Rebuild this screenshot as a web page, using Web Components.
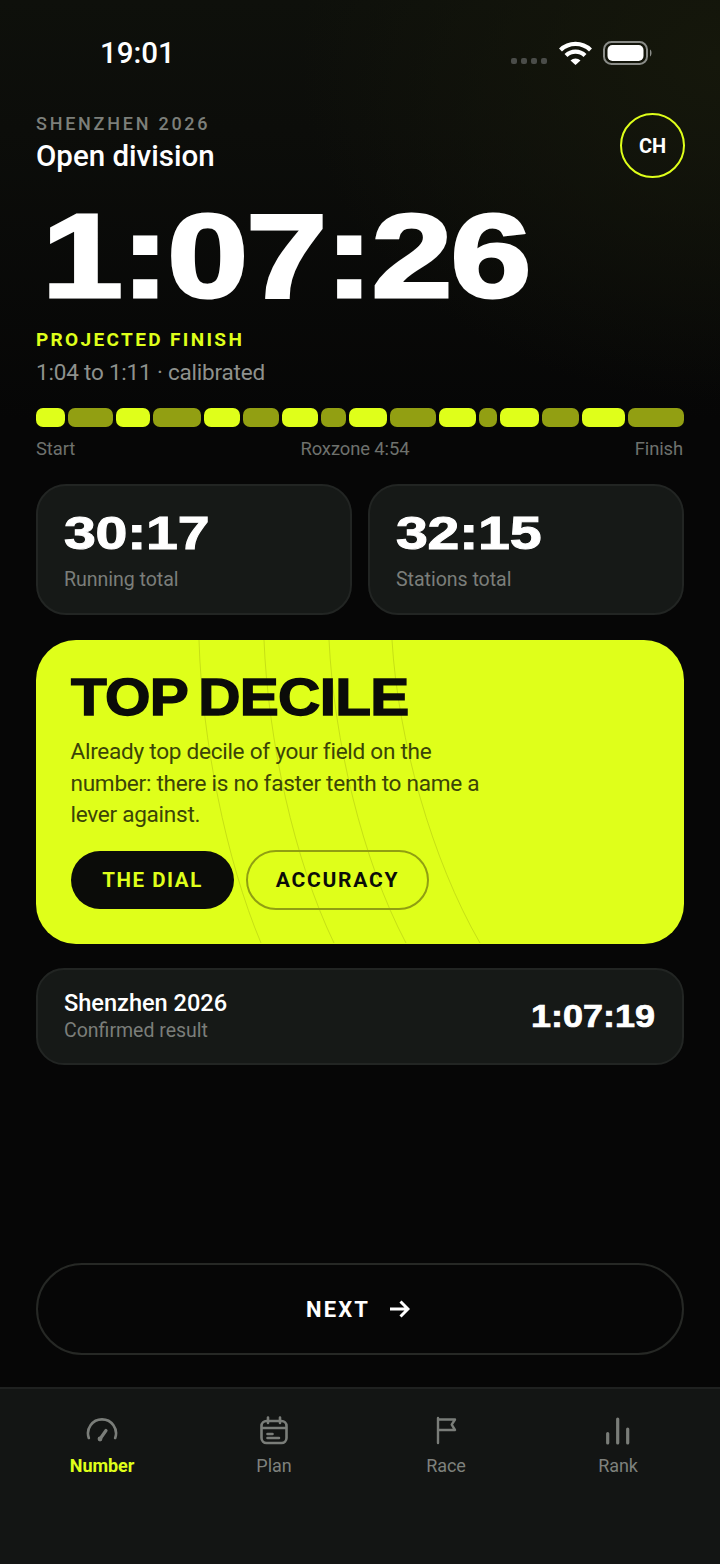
<!DOCTYPE html>
<html><head><meta charset="utf-8"><style>
html,body{margin:0;padding:0;background:#050505}
body{width:720px;height:1564px;overflow:hidden;font-family:Roboto,"Liberation Sans",sans-serif;color:#fff}
</style></head><body>
<x-screen>
  <x-status></x-status>
  <x-head></x-head>
  <x-big></x-big>
  <x-segments></x-segments>
  <x-stats></x-stats>
  <x-hero></x-hero>
  <x-result></x-result>
  <x-next></x-next>
  <x-tabs></x-tabs>
</x-screen>
<script>
function def(name,html){customElements.define(name,class extends HTMLElement{constructor(){super();this.attachShadow({mode:'open'}).innerHTML=html}})}
const wide='font-family:"Liberation Sans",sans-serif;font-weight:700;display:inline-block;transform-origin:left center;';
def('x-screen',`<style>:host{display:flex;flex-direction:column;width:720px;height:1564px;box-sizing:border-box;background:radial-gradient(420px 340px at 100% 60px,#15170b,transparent),linear-gradient(#0e100b 0,#0c0d0a 130px,#060606 420px)}</style><slot></slot>`);
def('x-status',`<style>:host{display:flex;height:104px;flex:none;align-items:flex-start;box-sizing:border-box;padding:37px 67px 0 100px;justify-content:space-between}
.t{font-family:Roboto,sans-serif;font-size:29.5px;font-weight:500;line-height:32px}
.r{display:flex;align-items:flex-start;height:28px;position:relative;width:143px}
.d{position:absolute;left:1px;top:21px;display:flex;gap:4px}.d i{width:6px;height:6px;border-radius:2px;background:#4a4c49}
svg{position:absolute;left:49px;top:3px}
</style><span class="t">19:01</span><span class="r"><span class="d"><i></i><i></i><i></i><i></i></span>
<svg width="96" height="26" viewBox="0 0 96 26"><path d="M1.5 10a21.5 21.5 0 0 1 30 0M7 15.5a13.5 13.5 0 0 1 19 0" fill="none" stroke="#fff" stroke-width="4.2" stroke-linecap="butt"/><path d="M11.5 20.5a7.5 7.5 0 0 1 10 0L16.5 25z" fill="#fff"/><rect x="45" y="2" width="43" height="22" rx="7.5" fill="none" stroke="#8a8c88" stroke-width="2"/><rect x="48.5" y="5" width="36" height="16" rx="5" fill="#fff"/><path d="M91 9.5c2 .5 2 6 0 7z" fill="#8a8c88"/></svg></span>`);
def('x-head',`<style>:host{display:flex;justify-content:space-between;flex:none;padding:8px 35px 0 36px;height:74px;box-sizing:border-box}
.a{font-size:18px;font-weight:500;letter-spacing:2.75px;color:#7c7f7a;line-height:24px}
.b{font-size:29.5px;font-weight:500;letter-spacing:0;line-height:40px;color:#fff}
.c{width:65px;height:65px;box-sizing:border-box;border:2.5px solid #dfff1a;border-radius:50%;display:flex;align-items:center;justify-content:center;font-size:20px;font-weight:700;margin-top:1px}
</style><div><div class="a">SHENZHEN 2026</div><div class="b">Open division</div></div><div class="c">CH</div>`);
def('x-big',`<style>:host{display:block;flex:none;padding:10px 36px 0;height:230px;box-sizing:border-box}
.n{${wide}font-size:118px;line-height:136px;height:136px;letter-spacing:-1.6px;transform:translateX(6px) scaleX(1.232);-webkit-text-stroke:3px #fff;white-space:nowrap;color:#fff}
.p{font-size:19px;font-weight:700;letter-spacing:2.35px;color:#dfff1a;line-height:24px;margin-top:4px}
.q{font-size:22.5px;color:#8e918d;line-height:36px;margin-top:2px;letter-spacing:-.2px}
</style><div class="n">1:07:26</div><div class="p">PROJECTED FINISH</div><div class="q">1:04 to 1:11 · calibrated</div>`);
const seg=[29.4,45,34.4,47.8,36.3,35.8,35.8,25.3,38.6,45.9,36.7,18.4,38.6,37.2,43.2,56.5];
def('x-segments',`<style>:host{display:block;flex:none;padding:0 36px;height:76px}
.b{display:flex;gap:3px;height:19px}.b i{display:block;border-radius:7px;background:#dfff1a;flex-basis:0}.b i:nth-child(even){background:#929f12;}
.l{display:flex;justify-content:space-between;font-size:18.4px;color:#6e716d;line-height:24px;margin-top:10px;letter-spacing:-.1px;padding-right:1px}
</style><div class="b">${seg.map(w=>`<i style="flex-grow:${w}"></i>`).join('')}</div><div class="l"><span>Start</span><span>Roxzone 4:54</span><span>Finish</span></div>`);
def('x-stats',`<style>:host{display:flex;flex:none;gap:16px;padding:0 36px;height:156px;align-items:flex-start}
.c{flex:1;height:131px;box-sizing:border-box;background:#161917;border:2px solid #222523;border-radius:30px;padding:22px 26px}
.n{${wide}font-size:46px;line-height:50px;transform:scaleX(1.245);-webkit-text-stroke:1px #fff;color:#fff;letter-spacing:-.2px}
.s{font-size:19.6px;color:#7b7e7a;line-height:26px;margin-top:9px;letter-spacing:-.05px}
</style><div class="c"><div class="n">30:17</div><div class="s">Running total</div></div><div class="c"><div class="n">32:15</div><div class="s">Stations total</div></div>`);
def('x-hero',`<style>:host{display:block;flex:none;margin:0 36px;height:304px;box-sizing:border-box;background:#dfff1a;border-radius:40px;position:relative;overflow:hidden;padding:30px 35px;color:#0b0c09}
svg{position:absolute;left:0;top:0}
.w{position:relative}
.t{${wide}font-size:52px;line-height:54px;letter-spacing:-.6px;word-spacing:-4px;transform:scaleX(1.125);-webkit-text-stroke:1.4px #0b0c09;white-space:nowrap}
.p{font-size:22.6px;line-height:31.5px;color:#3b4407;width:440px;margin:12px 0 0 -.5px;letter-spacing:-.28px}
.r{display:flex;gap:12px;align-items:center;margin-top:19px}
.k{height:58px;display:flex;align-items:center;justify-content:center;box-sizing:border-box;border-radius:29px;font-size:20.5px;font-weight:700;letter-spacing:1.55px;font-family:Roboto,sans-serif}
.k.a{width:163px;background:#0b0c09;color:#dfff1a}
.k.b{width:183px;height:60px;border-radius:30px;border:2.5px solid #909f12;color:#0b0c09;font-size:21px;letter-spacing:1.75px}
</style><svg width="648" height="304" fill="none" stroke="#c6e016" stroke-width="1"><path d="M163 0C166 100 190 220 225 303M228 0C232 100 258 220 298 303M293 0C298 100 326 220 370 303M356 0C362 100 396 220 444 303"/></svg>
<div class="w"><div class="t">TOP DECILE</div><div class="p">Already top decile of your field on the number: there is no faster tenth to name a lever against.</div><div class="r"><span class="k a">THE DIAL</span><span class="k b">ACCURACY</span></div></div>`);
def('x-result',`<style>:host{display:flex;flex:none;margin:24px 36px 0;height:97px;box-sizing:border-box;background:#161917;border:2px solid #222523;border-radius:28px;padding:0 27px 0 26px;align-items:center;justify-content:space-between}
.a{font-size:23.6px;font-weight:500;line-height:28px;letter-spacing:-.03px;color:#fff}.b{font-size:19.5px;color:#7b7e7a;line-height:26px;margin-top:1px}
.n{${wide}font-size:30.5px;transform:scaleX(1.18);transform-origin:right center;-webkit-text-stroke:.7px #fff;color:#fff}
</style><div><div class="a">Shenzhen 2026</div><div class="b">Confirmed result</div></div><div class="n">1:07:19</div>`);
def('x-next',`<style>:host{display:flex;flex:none;margin:198px 36px 0;height:92px;box-sizing:border-box;border:2px solid #262825;border-radius:46px;align-items:center;justify-content:center;gap:19px;padding-right:4px}
span{font-size:22px;font-weight:700;letter-spacing:2.1px;color:#fff}
</style><span>NEXT</span><svg width="21" height="18" viewBox="0 0 21 18" fill="none" stroke="#fff" stroke-width="3"><path d="M1 9H19M11.5 1.5 19 9l-7.5 7.5"/></svg>`);
const ic=`fill="none" stroke="#7a7d79" stroke-width="2.6" stroke-linecap="round" stroke-linejoin="round"`;
const icons=[
`<path d="M3.8 23A14 14 0 1 1 30.2 23"/><path d="M15 24L21 15.5" stroke-width="3.2"/><circle cx="15" cy="24" r="2.4" fill="#7a7d79" stroke="none"/>`,
`<rect x="4.5" y="6" width="25" height="22" rx="5"/><path d="M11 2.5V8M23 2.5V8M5 13H29M10.5 19H15.5M10.5 23H22"/>`,
`<path d="M9 3V28" stroke-width="2.4"/><path d="M9 4.5H26L22.7 9.7 26 15H9" stroke-width="2.4" stroke-linecap="butt"/>`,
`<path d="M6.7 18.5V28M16.7 4V28M26.7 14V28" stroke-width="3.2"/>`];
const names=['Number','Plan','Race','Rank'];
def('x-tabs',`<style>:host{display:grid;grid-template-columns:repeat(4,172px);flex:none;margin-top:32px;height:177px;box-sizing:border-box;background:#131514;border-top:2px solid #1f2120;padding:26px 16px 0}
.t{display:flex;flex-direction:column;align-items:center}
svg{display:block}
span{font-size:18px;line-height:24px;margin-top:7px;color:#7e817d;letter-spacing:-.05px}
.on span{color:#dfff1a;font-weight:700}
</style>${names.map((n,i)=>`<div class="t ${i?'':'on'}"><svg width="34" height="32" viewBox="0 0 34 32" ${ic}>${icons[i]}</svg><span>${n}</span></div>`).join('')}`);
</script>
</body></html>
